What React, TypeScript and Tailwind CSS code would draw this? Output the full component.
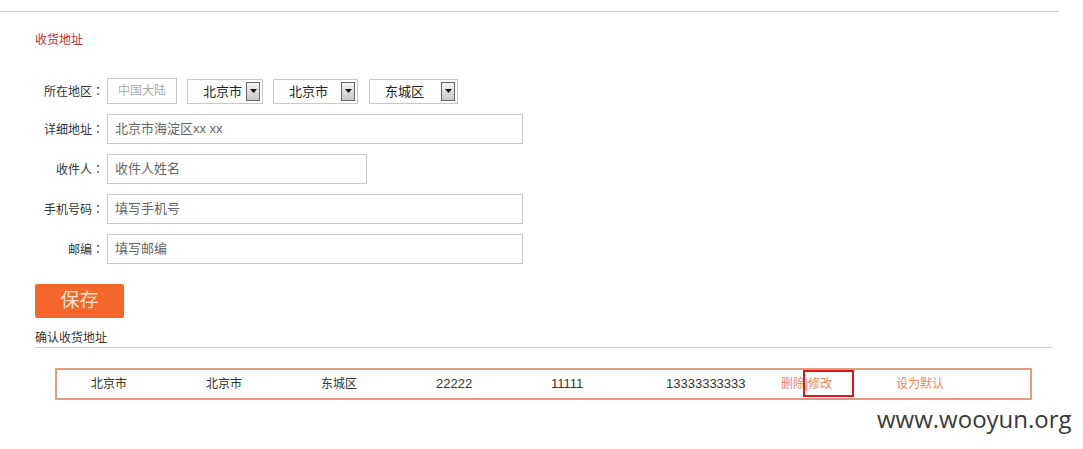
import React from "react";

const Arrow = () => (
  <span className="flex h-[19px] w-[14px] items-center justify-center border border-[#666] bg-gradient-to-b from-[#f4f4f4] to-[#c8c8c8]">
    <svg width="7" height="4" viewBox="0 0 7 4">
      <path d="M0 0h7L3.5 4z" fill="#111" />
    </svg>
  </span>
);

const Select = ({ label, w, pr }: { label: string; w: string; pr: string }) => (
  <div className={`flex h-[25px] items-center justify-between border border-[#c8c8c8] bg-white pl-[15px] ${w} ${pr}`}>
    <span className="text-[13px] leading-none text-[#222]">{label}</span>
    <Arrow />
  </div>
);

const Label = ({ text }: { text: string }) => (
  <div className="w-[104px] text-right text-[12px] text-[#333]">
    {text}
    <span className="font-['Noto_Sans_CJK_JP',sans-serif]">：</span>
  </div>
);

const Row = ({ label, placeholder, w }: { label: string; placeholder: string; w: string }) => (
  <div className="mt-[10px] flex h-[30px] items-center">
    <Label text={label} />
    <div className={`ml-[3px] flex h-[30px] items-center border border-[#c8c8c8] pl-[7px] text-[13px] text-[#666] ${w}`}>
      {placeholder}
    </div>
  </div>
);

export default function App() {
  const cells = ["北京市", "北京市", "东城区"];
  const nums = ["22222", "11111", "13333333333"];
  return (
    <div className="relative h-[449px] w-[1083px] overflow-hidden bg-white font-['Liberation_Sans','Noto_Sans_CJK_SC',sans-serif]">
      <div className="mt-[11px] h-px w-[1059px] bg-[#cfcfcf]" />
      <div className="mt-[20px] pl-[35px] text-[12px] leading-[16px] text-[#c0302e]">收货地址</div>

      <div className="mt-[30px] flex h-[26px] items-center">
        <Label text="所在地区" />
        <div className="ml-[3px] flex h-[26px] w-[70px] items-center border border-[#c8c8c8] pl-[10px] text-[12px] text-[#aaa]">
          中国大陆
        </div>
        <div className="ml-[10px]">
          <Select label="北京市" w="w-[76px]" pr="pr-[2px]" />
        </div>
        <div className="ml-[10px]">
          <Select label="北京市" w="w-[85px]" pr="pr-[2px]" />
        </div>
        <div className="ml-[11px]">
          <Select label="东城区" w="w-[89px]" pr="pr-[2px]" />
        </div>
      </div>

      <Row label="详细地址" placeholder="北京市海淀区xx xx" w="w-[416px]" />
      <Row label="收件人" placeholder="收件人姓名" w="w-[260px]" />
      <Row label="手机号码" placeholder="填写手机号" w="w-[416px]" />
      <Row label="邮编" placeholder="填写邮编" w="w-[416px]" />

      <div className="ml-[35px] mt-[20px] flex h-[34px] w-[89px] items-center justify-center rounded-[2px] bg-[#f4662a] text-[19px] text-[#fde3d4]">
        保存
      </div>

      <div className="ml-[35px] mt-[12px] w-[1017px] border-b border-[#cfcfcf] pb-[1px] text-[12px] leading-[16px] text-[#333]">
        确认收货地址
      </div>

      <div className="relative ml-[55px] mt-[20px] flex h-[32px] w-[977px] items-center border-2 border-[#e39c7e] pl-[34px] text-[12px] text-[#333]">
        {cells.map((c, i) => (
          <div key={i} className="w-[115px] shrink-0">
            {c}
          </div>
        ))}
        {nums.map((c, i) => (
          <div key={i} className="w-[115px] shrink-0 text-[13px]">
            {c}
          </div>
        ))}
        <div className="w-[115px] shrink-0 text-[#ea8a62]">删除|修改</div>
        <div className="w-[115px] shrink-0 text-[#ea8a62]">设为默认</div>
        <div className="absolute left-[746px] top-0 h-[27px] w-[51px] border-2 border-[#e0161c]" />
      </div>

      <div className="absolute left-[877px] top-[402px] font-['Open_Sans',sans-serif] text-[24px] leading-[33px] text-[#3a3a3a]">
        www.wooyun.org
      </div>
    </div>
  );
}
